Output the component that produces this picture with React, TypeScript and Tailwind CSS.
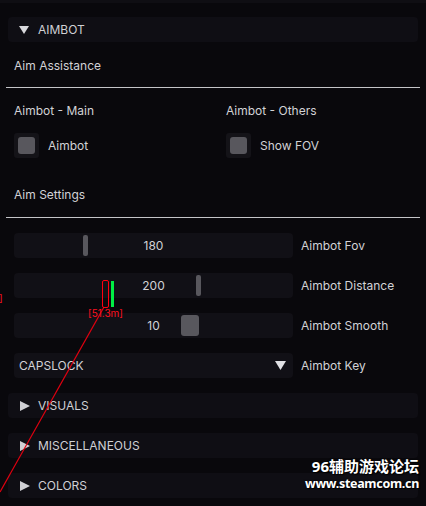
import React from 'react';

const font = { fontFamily: 'Inter, "Noto Sans", sans-serif' };

function Header({ title, open }: { title: string; open?: boolean }) {
  return (
    <div className="flex h-[25px] items-center rounded-[4px] bg-[#0f0e14] text-[12px] text-[#d0d0d4]">
      <div className="flex w-[30px] justify-center pl-[2px]">
        {open ? (
          <svg width="10" height="8" viewBox="0 0 10 8">
            <polygon points="0,0 10,0 5,8" fill="#d8d8dc" />
          </svg>
        ) : (
          <svg width="10" height="10" viewBox="0 0 10 10" className="ml-[2px]">
            <polygon points="0,0 10,5 0,10" fill="#d0d0d4" />
          </svg>
        )}
      </div>
      <span>{title}</span>
    </div>
  );
}

function Checkbox({ label }: { label: string }) {
  return (
    <div className="flex h-[25px] items-center gap-[9px]">
      <div className="flex h-[25px] w-[25px] items-center justify-center rounded-[3px] bg-[#141318]">
        <div className="h-[17px] w-[17px] rounded-[3px] bg-[#58575d]" />
      </div>
      <span>{label}</span>
    </div>
  );
}

function Slider({ value, label, grab }: { value: string; label: string; grab: 'thin' | 'thin2' | 'big' }) {
  return (
    <div className="flex h-[25px] items-center">
      <div className="relative flex h-[25px] w-[279px] items-center justify-center rounded-[4px] bg-[#111016]">
        {grab === 'thin' && <div className="absolute left-[69px] top-[2px] h-[21px] w-[5px] rounded-[2px] bg-[#58575d]" />}
        {grab === 'thin2' && <div className="absolute left-[182px] top-[2px] h-[21px] w-[5px] rounded-[2px] bg-[#58575d]" />}
        {grab === 'big' && <div className="absolute left-[167px] top-[2px] h-[21px] w-[18px] rounded-[3px] bg-[#58575d]" />}
        <span className="relative">{value}</span>
      </div>
      <span className="ml-[8px]">{label}</span>
    </div>
  );
}

export default function App() {
  return (
    <div className="relative h-[506px] w-[426px] overflow-hidden bg-[#09080c] text-[12px] text-[#d2d2d6]" style={font}>
      <div className="h-[3px] bg-[#0f0e13]" />
      <div className="px-[8px] pt-[14px]">
        <Header title="AIMBOT" open />
        <div className="px-[6px]">
          <div className="mt-[17px] h-[14px] leading-[14px]">Aim Assistance</div>
          <div className="-mx-[8px] mt-[14px] h-px bg-[#c4c4c8]" />
          <div className="mt-[16px] grid h-[14px] grid-cols-[212px_1fr] leading-[14px]">
            <span>Aimbot - Main</span>
            <span>Aimbot - Others</span>
          </div>
          <div className="mt-[15px] grid grid-cols-[212px_1fr]">
            <Checkbox label="Aimbot" />
            <Checkbox label="Show FOV" />
          </div>
          <div className="mt-[30px] h-[14px] leading-[14px]">Aim Settings</div>
          <div className="-mx-[8px] mt-[15px] h-px bg-[#c4c4c8]" />
          <div className="mt-[15px] flex flex-col gap-[15px]">
            <Slider value="180" label="Aimbot Fov" grab="thin" />
            <Slider value="200" label="Aimbot Distance" grab="thin2" />
            <Slider value="10" label="Aimbot Smooth" grab="big" />
            <div className="flex h-[25px] items-center">
              <div className="flex h-[25px] w-[279px] items-center justify-between rounded-[4px] bg-[#111016] pl-[5px] pr-[7px]">
                <span>CAPSLOCK</span>
                <svg width="11" height="9" viewBox="0 0 11 9">
                  <polygon points="0,0 11,0 5.5,9" fill="#e0e0e4" />
                </svg>
              </div>
              <span className="ml-[8px]">Aimbot Key</span>
            </div>
          </div>
        </div>
        <div className="mt-[15px] flex flex-col gap-[15px]">
          <Header title="VISUALS" />
          <Header title="MISCELLANEOUS" />
          <Header title="COLORS" />
        </div>
      </div>

      {/* esp overlay */}
      <svg className="pointer-events-none absolute left-0 top-0" width="426" height="506">
        <line x1="104" y1="307" x2="0" y2="492" stroke="#e00010" strokeWidth="1.2" />
        <rect x="102.5" y="280.5" width="6" height="27" rx="1.5" fill="none" stroke="#ff0010" strokeWidth="1" />
        <rect x="111" y="281" width="3" height="26" fill="#00ee44" />
      </svg>
      <span className="pointer-events-none absolute left-[88px] top-[307px] text-[10px] leading-[12px] text-[#ff1020]">[51.3m]</span>
      <span className="pointer-events-none absolute left-[-1px] top-[292px] text-[10px] leading-[12px] text-[#ff1020]">]</span>

      <div
        className="pointer-events-none absolute right-[7px] top-[456px] flex flex-col items-end font-bold text-white [text-shadow:0_0_2px_#000,1px_1px_1px_#000]"
        style={{ fontFamily: '"Noto Sans", "Noto Sans CJK SC", sans-serif' }}
      >
        <span className="text-[15px] leading-[20px]">96辅助游戏论坛</span>
        <span className="text-[12.5px] leading-[16px] tracking-[-0.3px]">www.steamcom.cn</span>
      </div>
    </div>
  );
}
